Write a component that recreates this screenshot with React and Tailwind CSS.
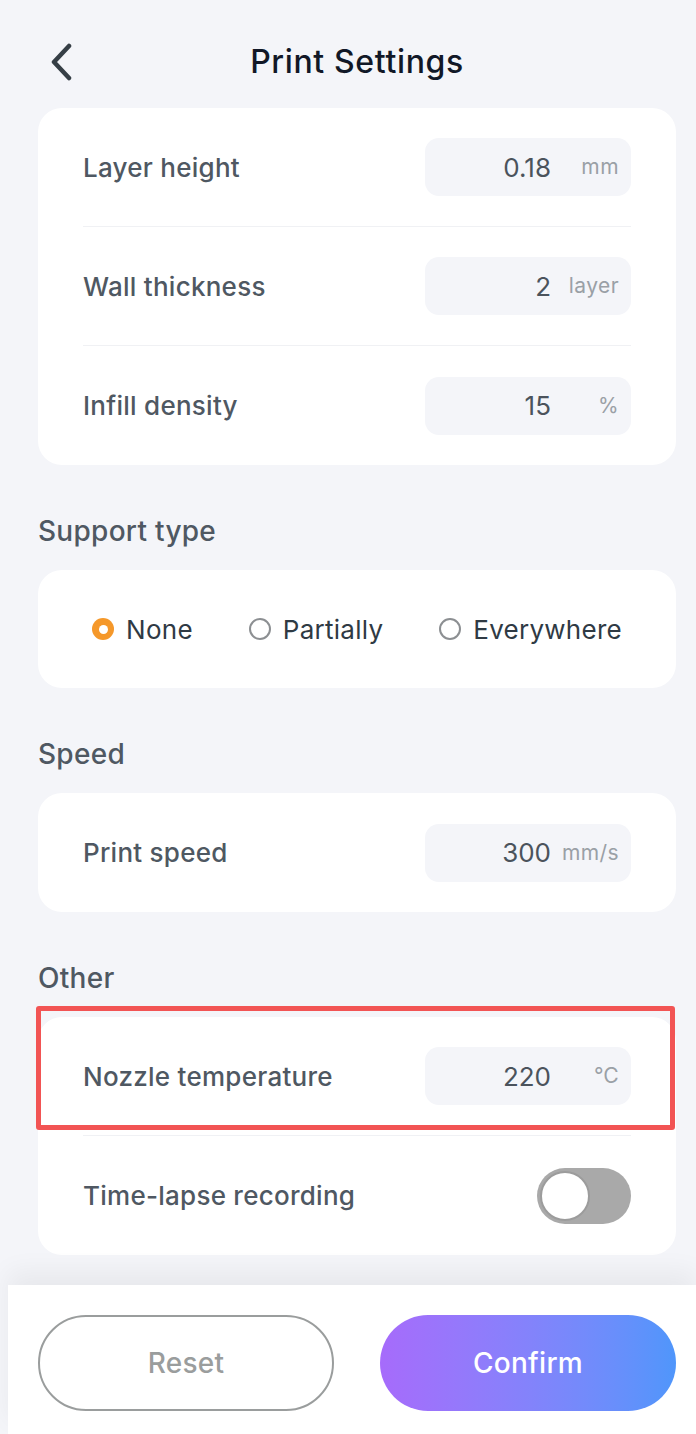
import React from 'react'

const font = { fontFamily: 'Inter, "Noto Sans", sans-serif' }

// Value box with unit
const ValueBox = ({ value, unit }) => (
  <div className="flex items-center w-[206px] h-[58px] rounded-[14px] bg-[#f4f5f9] pr-3">
    <span className="flex-1 text-right text-[26px] text-[#4b535c]">{value}</span>
    <span className="w-[68px] text-right text-[21px] text-[#9aa0a6] tracking-[0.02em]">{unit}</span>
  </div>
)

const Row = ({ label, children, divider }) => (
  <div className={`flex items-center justify-between h-[119px] ${divider ? 'border-b border-[#f0f1f4]' : ''}`}>
    <span className="text-[26px] font-medium tracking-[0.01em] text-[#4f5862]">{label}</span>
    {children}
  </div>
)

const Heading = ({ children }) => (
  <div className="px-[38px] pt-[48px] pb-[21px]">
    <h2 className="h-[36px] leading-[36px] text-[28px] font-medium tracking-[0.01em] text-[#4f5862]">{children}</h2>
  </div>
)

const Radio = ({ label, checked }) => (
  <div className="flex items-center gap-3">
    {checked ? (
      <span className="w-[22px] h-[22px] rounded-full bg-[#f5982a] flex items-center justify-center">
        <span className="w-[9px] h-[9px] rounded-full bg-white" />
      </span>
    ) : (
      <span className="w-[22px] h-[22px] rounded-full border-2 border-[#8c8f92]" />
    )}
    <span className="text-[26px] tracking-[0.01em] text-[#2f3a44]">{label}</span>
  </div>
)

export default function App() {
  return (
    <div className="min-h-[1434px] h-[1434px] bg-[#f4f5f9] flex flex-col overflow-hidden" style={font}>
      {/* Header */}
      <div className="relative flex items-center justify-center h-[108px] pt-4 pl-[18px] shrink-0">
        <button className="absolute left-[46px] top-[42px] w-[30px] h-[40px] flex items-center justify-center">
          <svg width="24" height="38" viewBox="0 0 24 38" fill="none">
            <path d="M20 3 L5 19 L20 35" stroke="#363f46" strokeWidth="4.5" strokeLinecap="round" strokeLinejoin="round" />
          </svg>
        </button>
        <h1 className="text-[32px] font-medium tracking-[0.02em] text-[#111827]">Print Settings</h1>
      </div>

      {/* Basic settings */}
      <div className="ml-[38px] mr-[20px] bg-white rounded-[24px] px-[45px] shrink-0">
        <Row label="Layer height" divider>
          <ValueBox value="0.18" unit="mm" />
        </Row>
        <Row label="Wall thickness" divider>
          <ValueBox value="2" unit="layer" />
        </Row>
        <Row label="Infill density">
          <ValueBox value="15" unit="%" />
        </Row>
      </div>

      <Heading>Support type</Heading>
      <div className="ml-[38px] mr-[20px] bg-white rounded-[24px] h-[118px] flex items-center justify-center gap-[56px] shrink-0">
        <Radio label="None" checked />
        <Radio label="Partially" />
        <Radio label="Everywhere" />
      </div>

      <Heading>Speed</Heading>
      <div className="ml-[38px] mr-[20px] bg-white rounded-[24px] px-[45px] shrink-0">
        <Row label="Print speed">
          <ValueBox value="300" unit="mm/s" />
        </Row>
      </div>

      <Heading>Other</Heading>
      <div className="ml-[38px] mr-[20px] bg-white rounded-[24px] px-[45px] shrink-0">
        <div className="relative">
          <Row label="Nozzle temperature" divider>
            <ValueBox value="220" unit="℃" />
          </Row>
          <div className="absolute -top-[11px] -left-[47px] -right-[44px] bottom-[6px] border-[5px] border-[#f25454] rounded-[3px] pointer-events-none" />
        </div>
        <Row label="Time-lapse recording">
          <div className="w-[94px] h-[56px] rounded-full bg-[#a9a9a9] flex items-center p-[3px]">
            <span className="w-[50px] h-[50px] rounded-full bg-white border-2 border-[#9c9c9c]" />
          </div>
        </Row>
      </div>

      {/* Bottom actions */}
      <div className="mt-auto ml-[8px] h-[149px] bg-white shadow-[0_-14px_24px_rgba(0,0,0,0.05)] flex items-start gap-[46px] pl-[30px] pr-[20px] pt-[30px] shrink-0">
        <button className="w-[296px] h-[96px] rounded-full border-2 border-[#9a9d9d] text-[28px] font-medium tracking-[0.01em] text-[#9a9d9d]">
          Reset
        </button>
        <button className="w-[296px] h-[96px] rounded-full bg-linear-to-r from-[#a66bfb] to-[#4f96fb] text-[28px] font-medium tracking-[0.01em] text-white">
          Confirm
        </button>
      </div>
    </div>
  )
}
